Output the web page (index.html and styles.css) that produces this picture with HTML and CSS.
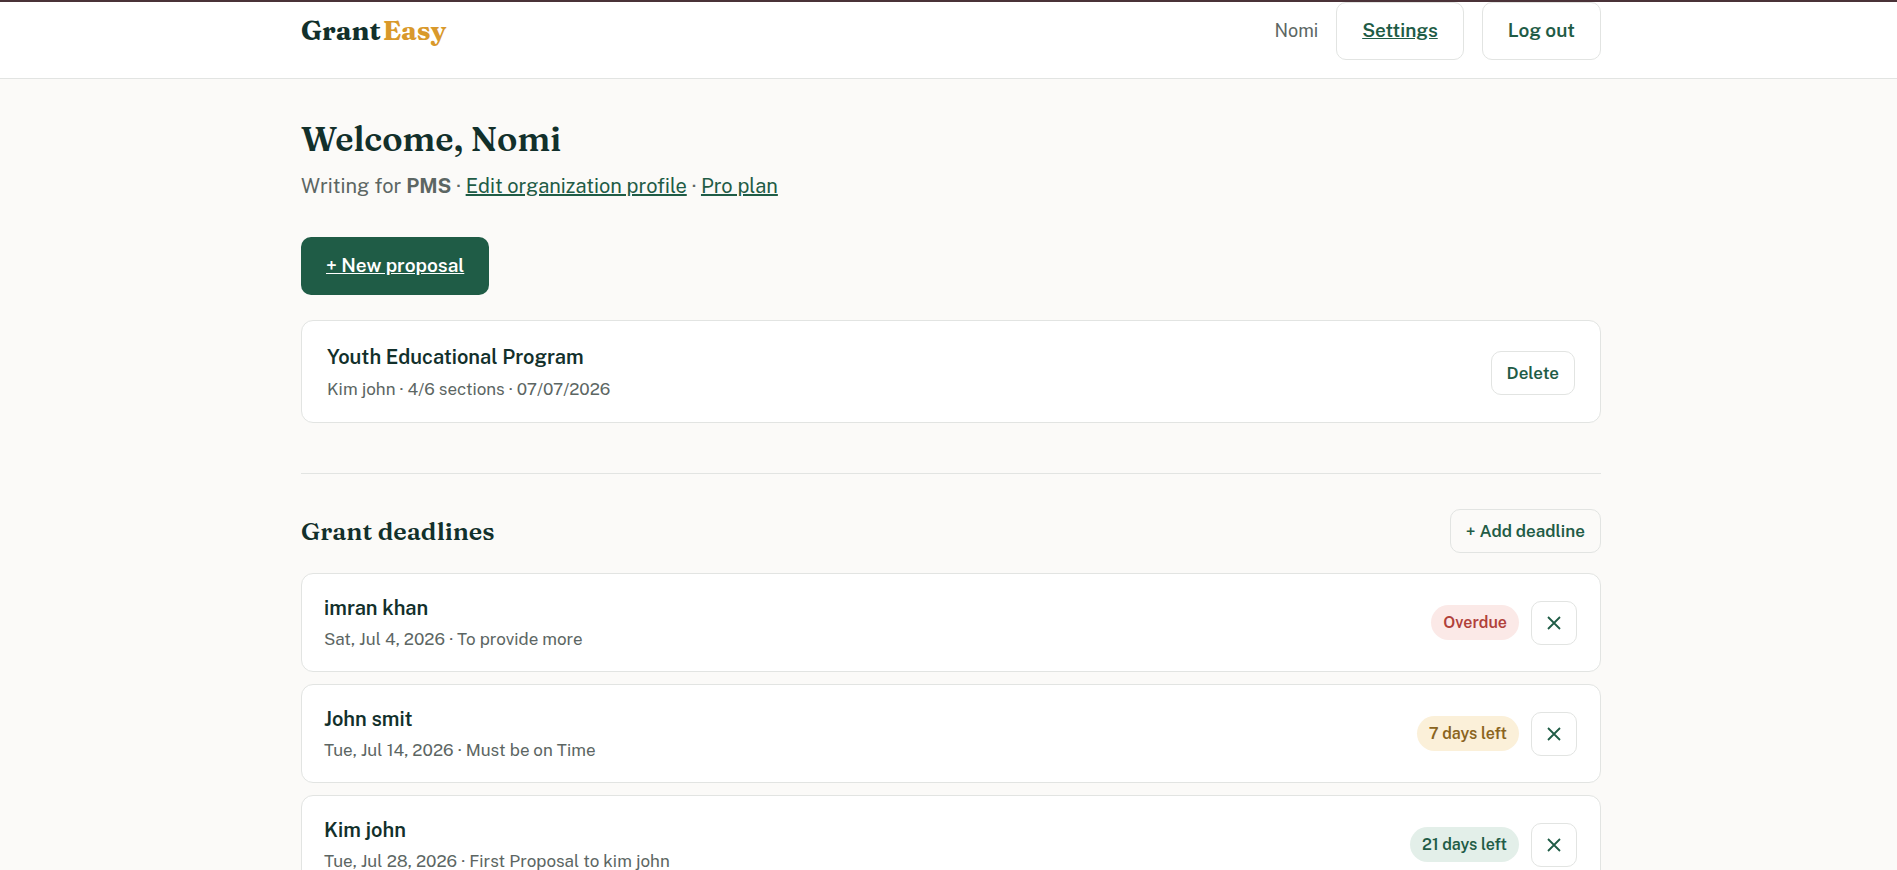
FILE: index.html
```
<!DOCTYPE html>
<html lang="en">
<head>
    <meta charset="UTF-8">
    <meta name="viewport" content="width=device-width, initial-scale=1.0">
    <link rel="stylesheet" href="styles.css">
    <title>GrantEasy</title>
</head>
<body>
    <header class="topbar">
        <div class="container topbar-inner">
            <div class="logo">Grant<span>Easy</span></div>
            <nav class="nav">
                <span class="user-name">Nomi</span>
                <a class="btn btn-ghost" href="#settings">Settings</a>
                <button class="btn btn-ghost" type="button">Log out</button>
            </nav>
        </div>
    </header>

    <main class="container">
        <h1>Welcome, Nomi</h1>
        <p class="subtitle">Writing for <strong>PMS</strong> · <a href="#profile">Edit organization profile</a> · <a href="#plan">Pro plan</a></p>

        <a class="btn btn-primary" href="#new">+ New proposal</a>

        <article class="card proposal">
            <div>
                <h3>Youth Educational Program</h3>
                <p class="meta">Kim john · 4/6 sections · 07/07/2026</p>
            </div>
            <button class="btn btn-ghost btn-small" type="button">Delete</button>
        </article>

        <section class="deadlines">
            <div class="section-head">
                <h2>Grant deadlines</h2>
                <button class="btn btn-ghost btn-small" type="button">+ Add deadline</button>
            </div>

            <ul class="deadline-list">
                <li class="card deadline">
                    <div>
                        <h3>imran khan</h3>
                        <p class="meta">Sat, Jul 4, 2026 · To provide more</p>
                    </div>
                    <div class="actions">
                        <span class="badge overdue">Overdue</span>
                        <button class="btn btn-ghost btn-small btn-icon" type="button" aria-label="Remove imran khan">
                            <svg width="14" height="14" viewBox="0 0 14 14"><path d="M1 1L13 13M13 1L1 13"/></svg>
                        </button>
                    </div>
                </li>
                <li class="card deadline">
                    <div>
                        <h3>John smit</h3>
                        <p class="meta">Tue, Jul 14, 2026 · Must be on Time</p>
                    </div>
                    <div class="actions">
                        <span class="badge soon">7 days left</span>
                        <button class="btn btn-ghost btn-small btn-icon" type="button" aria-label="Remove John smit">
                            <svg width="14" height="14" viewBox="0 0 14 14"><path d="M1 1L13 13M13 1L1 13"/></svg>
                        </button>
                    </div>
                </li>
                <li class="card deadline">
                    <div>
                        <h3>Kim john</h3>
                        <p class="meta">Tue, Jul 28, 2026 · First Proposal to kim john</p>
                    </div>
                    <div class="actions">
                        <span class="badge ok">21 days left</span>
                        <button class="btn btn-ghost btn-small btn-icon" type="button" aria-label="Remove Kim john">
                            <svg width="14" height="14" viewBox="0 0 14 14"><path d="M1 1L13 13M13 1L1 13"/></svg>
                        </button>
                    </div>
                </li>
            </ul>
        </section>
    </main>
</body>
</html>
```
FILE: styles.css
```
* {
    box-sizing: border-box;
    margin: 0;
    padding: 0;
}

html {
    scrollbar-width: none;
}

body {
    font-family: "Public Sans", Inter, "Liberation Sans", sans-serif;
    font-size: 20px;
    line-height: 32px;
    color: #12302b;
    background-color: #fbfaf8;
}

.container {
    max-width: 1305px;
    margin: 0 auto;
    padding-left: 5px;
}

.topbar {
    background-color: #fff;
    border-top: 2px solid #4a3238;
    border-bottom: 1px solid #e2e4e2;
}

.topbar-inner {
    display: flex;
    justify-content: space-between;
    align-items: center;
    padding-bottom: 18px;
}

.logo,
h1,
h2 {
    font-family: Fraunces, "Liberation Serif", serif;
}

.logo {
    display: flex;
    gap: 2px;
    font-size: 27px;
    font-weight: 700;
}

.logo span {
    color: #d9992b;
}

.nav {
    display: flex;
    align-items: center;
    gap: 18px;
}

.user-name {
    font-size: 18px;
    color: #5c6663;
}

h1 {
    margin-top: 36px;
    font-size: 34px;
    font-weight: 600;
    line-height: 48px;
}

h2 {
    font-size: 25px;
    font-weight: 600;
}

h3 {
    font-size: 20px;
    font-weight: 600;
    line-height: 33px;
}

.subtitle {
    margin: 7px 0 35px;
    color: #5c6663;
}

.subtitle a {
    color: #1f5c46;
}

.btn {
    display: inline-flex;
    align-items: center;
    justify-content: center;
    padding: 11px 25px 13px;
    border: 1px solid transparent;
    border-radius: 10px;
    font: inherit;
    font-size: 19px;
    font-weight: 600;
    line-height: 32px;
    cursor: pointer;
}

.btn-ghost {
    color: #1f5c46;
    background-color: transparent;
    border-color: #e2e4e2;
}

.btn-primary {
    padding: 11px 24px 13px;
    color: #fff;
    background-color: #1f5c46;
}

.btn-small {
    padding: 8px 15px;
    font-size: 17px;
    line-height: 26px;
}

.btn-icon {
    width: 46px;
    height: 44px;
    padding: 0;
}

.btn-icon svg {
    fill: none;
    stroke: currentColor;
    stroke-width: 1.8;
}

.card {
    display: flex;
    justify-content: space-between;
    align-items: center;
    background-color: #fff;
    border: 1px solid #e2e4e2;
    border-radius: 12px;
}

.proposal {
    margin-top: 25px;
    padding: 20px 25px 18px;
}

.meta {
    font-size: 17px;
    line-height: 30px;
    color: #5c6663;
}

.deadlines {
    margin-top: 50px;
    padding-top: 35px;
    border-top: 1px solid #e2e4e2;
}

.section-head {
    display: flex;
    justify-content: space-between;
    align-items: center;
    margin-bottom: 20px;
}

.deadline-list {
    display: grid;
    gap: 12px;
    list-style: none;
}

.deadline {
    padding: 17px 23px 17px 22px;
}

.deadline h3 {
    padding-top: 1px;
    line-height: 32px;
}

.actions {
    display: flex;
    align-items: center;
    gap: 12px;
}

.badge {
    padding: 4px 12px;
    border-radius: 999px;
    font-size: 16px;
    font-weight: 600;
    line-height: 27px;
}

.overdue {
    color: #b0413a;
    background-color: #fbe9e7;
}

.soon {
    color: #8a6420;
    background-color: #fbf0d9;
}

.ok {
    color: #1f5c46;
    background-color: #e3efe9;
}
```
